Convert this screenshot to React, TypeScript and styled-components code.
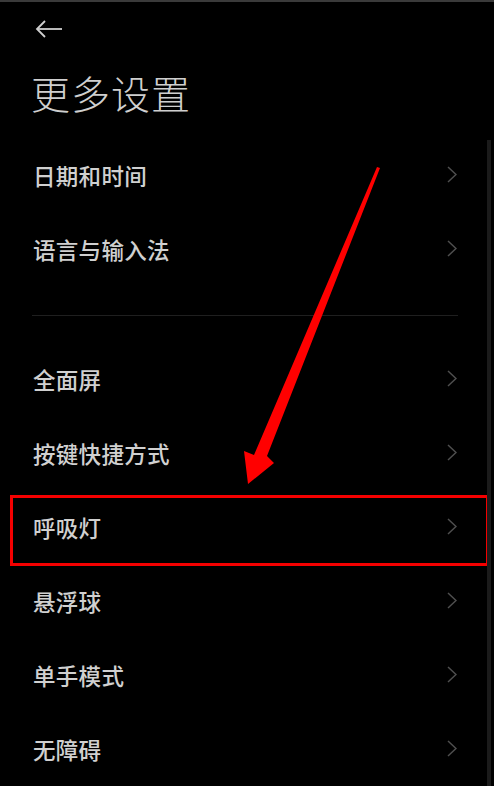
import React from "react";
import styled, { createGlobalStyle } from "styled-components";

const GlobalStyle = createGlobalStyle`
  html, body {
    margin: 0;
    padding: 0;
    background: #000;
  }
  body {
    font-family: "Noto Sans CJK SC", "Noto Sans", sans-serif;
    overflow: hidden;
  }
`;

const Screen = styled.div`
  position: relative;
  width: 494px;
  height: 786px;
  background: #000;
  overflow: hidden;
`;

const TopStrip = styled.div`
  height: 2px;
  background: #3a3a3a;
`;

const NavBar = styled.div`
  height: 54px;
  display: flex;
  align-items: center;
  padding-left: 35px;
`;

const BackButton = styled.button`
  display: flex;
  align-items: center;
  padding: 0;
  border: none;
  background: none;
  cursor: pointer;
`;

const Title = styled.h1`
  margin: 0;
  padding: 11px 0 22px 31px;
  font-size: 39px;
  line-height: 50px;
  font-weight: 300;
  color: #cfcfcf;
  letter-spacing: 1px;
`;

const List = styled.div`
  display: flex;
  flex-direction: column;
`;

const Row = styled.div<{ marked?: boolean }>`
  position: relative;
  height: 74px;
  box-sizing: border-box;
  display: flex;
  align-items: center;
  justify-content: space-between;
  padding: 0 37px 3px 33px;

  &::after {
    content: "";
    display: ${(p) => (p.marked ? "block" : "none")};
    position: absolute;
    left: 10px;
    right: 5px;
    top: 4px;
    bottom: -1px;
    border: 3px solid #f40000;
  }
`;

const Label = styled.span`
  font-size: 22.5px;
  font-weight: 500;
  color: #d0d0d0;
  letter-spacing: 0.3px;
`;

const GroupGap = styled.div`
  height: 56px;
  display: flex;
  align-items: center;
  padding: 0 36px 0 32px;
`;

const Divider = styled.div`
  flex: 1;
  height: 1px;
  background: #1f1f1f;
`;

const ScrollTrack = styled.div`
  position: absolute;
  right: 3px;
  top: 140px;
  bottom: 0;
  width: 4px;
  background: #1b1b1b;
`;

const Annotation = styled.svg`
  position: absolute;
  inset: 0;
  pointer-events: none;
`;

const BackIcon = () => (
  <svg width="28" height="18" viewBox="0 0 28 18" fill="none">
    <path d="M2 9H27" stroke="#cfcfcf" strokeWidth="1.8" />
    <path d="M10 1L2 9L10 17" stroke="#cfcfcf" strokeWidth="1.8" />
  </svg>
);

const Chevron = () => (
  <svg width="10" height="17" viewBox="0 0 10 17" fill="none">
    <path d="M1 1L9 8.5L1 16" stroke="#4f4f4f" strokeWidth="1.5" />
  </svg>
);

const firstGroup = ["日期和时间", "语言与输入法"];
const secondGroup = ["全面屏", "按键快捷方式", "呼吸灯", "悬浮球", "单手模式", "无障碍"];

export default function App() {
  return (
    <Screen>
      <GlobalStyle />
      <TopStrip />
      <NavBar>
        <BackButton aria-label="返回">
          <BackIcon />
        </BackButton>
      </NavBar>
      <Title>更多设置</Title>
      <List>
        {firstGroup.map((item) => (
          <Row key={item}>
            <Label>{item}</Label>
            <Chevron />
          </Row>
        ))}
        <GroupGap>
          <Divider />
        </GroupGap>
        {secondGroup.map((item) => (
          <Row key={item} marked={item === "呼吸灯"}>
            <Label>{item}</Label>
            <Chevron />
          </Row>
        ))}
      </List>
      <ScrollTrack />
      <Annotation width="494" height="786" viewBox="0 0 494 786">
        <polygon
          points="377,167 380,168 267,456 274,463 248,484 244,451 254,455"
          fill="#f00"
        />
      </Annotation>
    </Screen>
  );
}
